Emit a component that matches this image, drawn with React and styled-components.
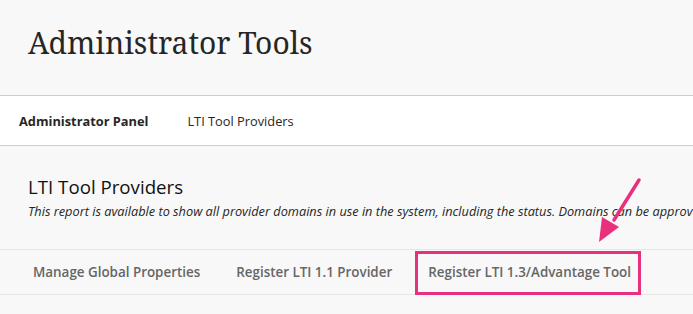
// App.jsx
// Administrator Tools / LTI Tool Providers screen.

import React from 'react';
import styled, { createGlobalStyle } from 'styled-components';

// Styles
//////////////////////////////////////////////////////////////////////

const GlobalStyle = createGlobalStyle`
  html, body {
    margin: 0;
    padding: 0;
    background: #f8f8f8;
  }
  body {
    font-family: "Open Sans", "Liberation Sans", sans-serif;
    color: #262626;
    overflow: hidden;
  }
`

const Page = styled.div`
  position: relative;
  width: 693px;
  height: 314px;
  background: #f8f8f8;
  overflow: hidden;
`

const Header = styled.header`
  height: 96px;
  box-sizing: border-box;
  padding: 22px 0 0 28px;
  border-bottom: 1px solid #cdcdcd;
`

const Title = styled.h1`
  margin: 0;
  font-family: "Noto Serif", "DejaVu Serif", serif;
  font-weight: 400;
  font-size: 30px;
  line-height: 42px;
  color: #262626;
`

const Breadcrumbs = styled.nav`
  display: flex;
  align-items: center;
  gap: 39px;
  height: 49px;
  padding-left: 19px;
  background: #fff;
  border-bottom: 1px solid #cdcdcd;
`

const Crumb = styled.span`
  font-size: 12.8px;
  font-weight: ${p => (p.$current ? 700 : 400)};
  color: #262626;
`

const Section = styled.section`
  padding: 27px 0 0 28px;
  height: 103px;
  box-sizing: border-box;
  overflow: hidden;
`

const SectionTitle = styled.h2`
  margin: 0;
  font-size: 18.7px;
  font-weight: 400;
  line-height: 28px;
  color: #111;
`

const Description = styled.p`
  margin: 1px 0 0;
  font-size: 12.75px;
  font-style: italic;
  line-height: 18px;
  white-space: nowrap;
  color: #262626;
`

const Tabs = styled.div`
  display: flex;
  align-items: stretch;
  height: 44px;
  padding-left: 15px;
  border-top: 1px solid #e6e6e6;
  border-bottom: 1px solid #e6e6e6;
`

const Tab = styled.div`
  position: relative;
  display: flex;
  align-items: center;
  padding: 0 18px;
  font-size: 13.4px;
  font-weight: 600;
  color: #666;
  white-space: nowrap;

  ${p => p.$highlighted && `
    &::after {
      content: '';
      position: absolute;
      left: 5px;
      right: 8px;
      top: 1px;
      bottom: -1px;
      border: 3px solid #e8307d;
    }
  `}
`

const Arrow = styled.svg`
  position: absolute;
  left: 590px;
  top: 170px;
`

// Render Page
//////////////////////////////////////////////////////////////////////

const App = () => {
  return (
    <Page>
      <GlobalStyle />
      <Header>
        <Title>Administrator Tools</Title>
      </Header>
      <Breadcrumbs>
        <Crumb $current>Administrator Panel</Crumb>
        <Crumb>LTI Tool Providers</Crumb>
      </Breadcrumbs>
      <Section>
        <SectionTitle>LTI Tool Providers</SectionTitle>
        <Description>
          This report is available to show all provider domains in use in the system, including the status. Domains can be approved, excluded or disabled.
        </Description>
      </Section>
      <Tabs>
        <Tab>Manage Global Properties</Tab>
        <Tab>Register LTI 1.1 Provider</Tab>
        <Tab $highlighted>Register LTI 1.3/Advantage Tool</Tab>
      </Tabs>
      <Arrow width="60" height="80" viewBox="0 0 60 80">
        <line x1="49" y1="10" x2="24" y2="50" stroke="#e8307d" strokeWidth="3.5" strokeLinecap="round" />
        <polygon points="9,72 12,47 29,57" fill="#e8307d" />
      </Arrow>
    </Page>
  );
};

export default App;

//////////////////////////////////////////////////////////////////////
// End Component
